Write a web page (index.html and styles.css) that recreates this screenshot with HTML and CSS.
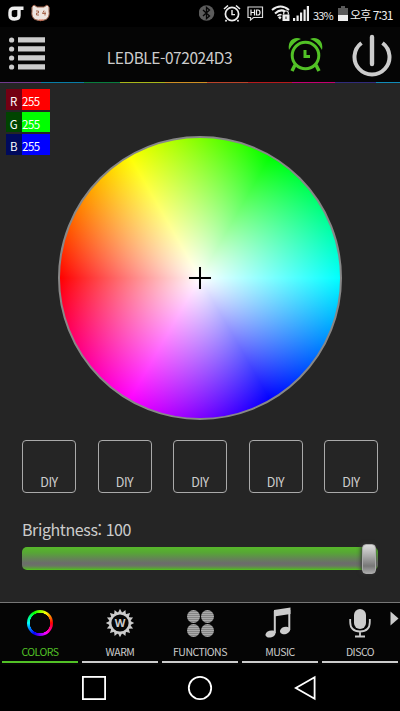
FILE: index.html
```html
<!DOCTYPE html>
<html lang="ko">
<head>
    <meta charset="UTF-8">
    <meta name="viewport" content="width=device-width, initial-scale=1.0">
    <title>LEDBLE</title>
    <link rel="stylesheet" href="styles.css">
</head>
<body>
    <div class="app">
        <div class="status-bar">
            <svg class="carrier" width="16" height="16" viewBox="0 0 16 16"><path d="M15.5 2.3H6.5Q2 2.3 2 6.5V9.5Q2 13 6.5 13T11 9.5V2.5" fill="none" stroke="#eee" stroke-width="3.4"/></svg>
            <svg class="cat" width="19" height="18" viewBox="0 0 19 18">
                <path d="M1 7Q0 2 3 1L6 3H13L16 1Q19 2 18 7Q19 13 15 15.5Q9.5 18 4 15.5Q0 13 1 7Z" fill="#eee5df" stroke="#9b6049"/>
                <path d="M5 7H7.500V9H5.500V11H8M13 6.500L11.500 9.500H15M14 7.500V11.500" fill="none" stroke="#a7674d"/>
                <path d="M8 16H12" stroke="#d66b50"/>
            </svg>
            <div class="status-icons">
                <svg width="16" height="18" viewBox="0 0 16 18"><circle cx="7.5" cy="9" r="7.8" fill="#5c5c5c"/><path d="M4 6L10.5 12L7.5 14.5V3.5L10.5 6L4 12" fill="none" stroke="#050505" stroke-width="1.3"/></svg>
                <svg class="small-alarm" width="18" height="19" viewBox="0 0 18 19"><g fill="none" stroke="#eee"><circle cx="9" cy="10" r="6.6" stroke-width="1.7"/><path d="M1 5L5 1.5M17 5L13 1.5M3.5 16L2.5 17.5M14.5 16L15.5 17.5" stroke-width="1.6"/><path d="M9 6V10.6H12" stroke-width="1.4"/></g></svg>
                <svg class="hd" width="17" height="17" viewBox="0 0 17 17"><path d="M1 2H15.5V12.5H6.5L3.5 15V12.5H1Z" fill="none" stroke="#ddd" stroke-width="1.2"/><path d="M4 4.5V10.5M7.5 4.5V10.5M4 7.5H7.5M9.5 5H11Q13 5 13 7.5T11 10H9.5Z" fill="none" stroke="#eee" stroke-width="1.2"/></svg>
                <svg class="wifi" width="20" height="18" viewBox="0 0 20 18"><g fill="none" stroke="#eee" stroke-width="2"><path d="M1 6Q9.500 -1 18 6M4 9.500Q9.500 4.500 14 7.500"/><path d="M6.500 12Q8.500 10 10.500 11" stroke-width="1.600"/></g><path d="M7 13.500L9 12L10.500 13.500L9 15.500Z" fill="#eee"/><path d="M11.500 10.500H18.500V17H11.500Z" fill="#eee"/><path d="M12.700 10.500V9Q12.700 7 15 7T17.300 9V10.500" fill="none" stroke="#eee" stroke-width="1.200"/><path d="M15 12.500V15" stroke="#111"/></svg>
                <svg class="signal" width="17" height="17" viewBox="0 0 17 17"><path d="M0 13H2.200V16H0ZM3.500 10.500H5.700V16H3.500ZM7 7.500H9.200V16H7ZM10.500 4.500H12.700V16H10.500ZM13.800 1H16V16H13.800Z" fill="#eee"/></svg>
                <span class="percent">33%</span>
                <svg class="battery" width="10" height="16" viewBox="0 0 10 16"><path d="M3 0H7V2H10V10H0V2H3Z" fill="#595959"/><path d="M0 9H10V15H0Z" fill="#eee"/></svg>
                <span class="clock">오후 7:31</span>
            </div>
        </div>

        <div class="header">
            <svg class="menu" width="37" height="34" viewBox="0 0 37 34"><g fill="#ccc"><circle cx="2.600" cy="3" r="2.600"/><circle cx="2.600" cy="12" r="2.600"/><circle cx="2.600" cy="21" r="2.600"/><circle cx="2.600" cy="30" r="2.600"/><path d="M9 .300H36V5.500H9ZM9 9.300H36V14.500H9ZM9 18.300H36V23.500H9ZM9 27.300H36V32.500H9Z"/></g></svg>
            <div class="title"><span>LEDBLE-072024D3</span></div>
            <svg class="alarm" width="36" height="36" viewBox="0 0 36 36"><g fill="none" stroke="#52c126"><circle cx="17.500" cy="18.500" r="13.300" stroke-width="3"/><path d="M17 13V19.500H22" stroke-width="3"/><path d="M7 28L4 34M28 28L31 34" stroke-width="3.500"/></g><path d="M1 13Q-.500 5 5 2Q9 0 13 2Q5 5 1 13ZM34 13Q35.500 5 30 2Q26 0 22 2Q30 5 34 13Z" fill="#52c126"/></svg>
            <svg class="power" width="40" height="43" viewBox="0 0 40 43"><path d="M9.500 9A17.500 17.500 0 1 0 30.500 9" fill="none" stroke="#ccc" stroke-width="4"/><path d="M20 3V30" stroke="#ccc" stroke-width="4.400" stroke-linecap="round"/></svg>
        </div>
        <div class="rainbow"></div>

        <div class="main">
            <div class="rgb">
                <div class="channel red"><span>R</span><b>255</b></div>
                <div class="channel green"><span>G</span><b>255</b></div>
                <div class="channel blue"><span>B</span><b>255</b></div>
            </div>
            <div class="wheel">
                <svg width="24" height="24" viewBox="0 0 24 24"><path d="M.500 12H23.500M12 .500V23.500" stroke="#eee" stroke-opacity=".5" stroke-width="3"/><path d="M1 12H23M12 1V23" stroke="#000" stroke-width="2"/></svg>
            </div>
            <div class="presets">
                <div class="preset">DIY</div>
                <div class="preset">DIY</div>
                <div class="preset">DIY</div>
                <div class="preset">DIY</div>
                <div class="preset">DIY</div>
            </div>
            <div class="brightness"><span>Brightness: 100</span></div>
            <div class="slider"><div class="thumb"></div></div>
        </div>

        <div class="tabs">
            <div class="tab active">
                <div class="icon"><div class="color-ring"></div></div>
                <span>COLORS</span>
            </div>
            <div class="tab">
                <div class="icon"><svg width="30" height="30" viewBox="0 0 30 30">
                    <circle cx="15" cy="15" r="9.700" fill="none" stroke="#ccc" stroke-width="2.200"/>
                    <path id="rays" d="M12.800 5L15 .800L17.200 5ZM12.800 25L15 29.200L17.200 25ZM5 12.800L.800 15L5 17.200ZM25 12.800L29.200 15L25 17.200Z" fill="#ccc"/>
                    <use href="#rays" transform="rotate(22.500 15 15)"/><use href="#rays" transform="rotate(45 15 15)"/><use href="#rays" transform="rotate(67.500 15 15)"/>
                    <text x="15" y="19" text-anchor="middle" class="w-letter">W</text>
                </svg></div>
                <span>WARM</span>
            </div>
            <div class="tab">
                <div class="icon"><div class="dots"><i></i><i></i><i></i><i></i></div></div>
                <span>FUNCTIONS</span>
            </div>
            <div class="tab">
                <div class="icon"><svg class="note" width="28" height="32" viewBox="0 0 28 32"><path d="M10 3L26.500 .500V7L10 9.500Z" fill="#ccc"/><path d="M10.800 4V26M25.300 3V23" stroke="#ccc" stroke-width="2"/><ellipse cx="6.500" cy="27" rx="5.200" ry="3.400" transform="rotate(-18 6.500 27)" fill="#ccc"/><ellipse cx="21" cy="23.500" rx="5.200" ry="3.600" transform="rotate(-18 21 23.500)" fill="#ccc"/></svg></div>
                <span>MUSIC</span>
            </div>
            <div class="tab">
                <div class="icon"><svg width="24" height="30" viewBox="0 0 24 30"><rect x="6" y="1" width="12" height="20" rx="6" fill="#ccc"/><path d="M2.200 11V14Q2.200 23.500 12 23.500T21.800 14V11M12 23.500V28.500M7 28.500H17" fill="none" stroke="#ccc" stroke-width="1.800"/></svg></div>
                <span>DISCO</span>
                <svg class="more" width="9" height="15" viewBox="0 0 9 15"><path d="M.500 .500L8.500 7.500L.500 14.500Z" fill="#ccc"/></svg>
            </div>
        </div>

        <div class="nav-bar">
            <svg width="24" height="26" viewBox="0 0 24 26"><rect x=".900" y="1.900" width="22.200" height="22.200" fill="none" stroke="#fff" stroke-width="1.800"/></svg>
            <svg width="26" height="26" viewBox="0 0 26 26"><circle cx="13" cy="13" r="11.200" fill="none" stroke="#fff" stroke-width="1.800"/></svg>
            <svg width="22" height="26" viewBox="0 0 22 26"><path d="M20.600 2.200V23.800L1.800 13Z" fill="none" stroke="#fff" stroke-width="1.800"/></svg>
        </div>
    </div>
</body>
</html>
```

FILE: styles.css
```css
* {
    box-sizing: border-box;
}
body {
    margin: 0;
    background: #000;
    color: #ccc;
    font-family: "Noto Sans CJK KR", "Noto Sans", sans-serif;
}
svg {
    display: block;
    flex: none;
}
.app {
    width: 400px;
    height: 711px;
    overflow: hidden;
}
.status-bar {
    display: flex;
    height: 27px;
    padding-left: 8px;
    color: #eee;
}
.carrier {
    margin-top: 6px;
}
.cat {
    margin: 4px 0 0 7px;
}
.status-icons {
    display: flex;
    flex: 1;
    margin-left: 149px;
    padding-top: 4px;
    white-space: nowrap;
}
.small-alarm {
    margin-left: 8px;
}
.hd {
    margin: 1px 0 0 6px;
}
.wifi {
    margin: 0 0 0 7px;
}
.signal {
    margin: 1px 0 0 2px;
}
.percent {
    width: 24px;
    margin-left: 3px;
    font-size: 11px;
    line-height: 22px;
    letter-spacing: -0.8px;
}
.battery {
    margin: 2px 0 0 1px;
}
.clock {
    margin-left: 2px;
    font-size: 12px;
    line-height: 22px;
    letter-spacing: -0.9px;
}
.header {
    display: flex;
    height: 55px;
    padding-left: 9px;
    background: #050505;
}
.menu {
    margin-top: 10px;
}
.title {
    width: 247px;
    text-align: center;
    font-size: 15.5px;
    line-height: 60px;
    letter-spacing: -0.45px;
    white-space: nowrap;
}
.alarm {
    margin: 10px 0 0 -5px;
}
.power {
    margin: 7px 0 0 28px;
}
.rainbow {
    height: 1px;
    background: linear-gradient(90deg, #713a8d 41px, #087da6 41px 84px, #087d3e 84px 120px, #a8b619 120px 165px, #cf8f23 165px 207px, #bb4329 207px 248px, #b6191c 248px 292px, #c50070 292px 335px, #302b7b 335px 376px, #118bb9 376px);
}
.main {
    height: 519px;
    padding-top: 6px;
    background: #252525;
}
.rgb {
    display: flex;
    flex-direction: column;
    gap: 2px;
    height: 48px;
    margin-left: 5.5px;
}
.channel {
    display: flex;
    flex: none;
    width: 44.5px;
    height: 20.7px;
    color: #fff;
    font-size: 11.5px;
    line-height: 25px;
}
.channel span {
    width: 16.5px;
    text-align: center;
}
.channel b {
    flex: 1;
    font-weight: normal;
    letter-spacing: -0.5px;
}
.red { background: #f00; }
.red span { background: #740013; }
.green { background: #0f0; }
.green span { background: #004400; }
.blue { background: #00f; }
.blue span { background: #000a5c; }
.red span, .green span, .blue span {
    height: 100%;
}
.wheel {
    display: grid;
    place-items: center;
    width: 284px;
    height: 284px;
    margin-left: 58px;
    margin-top: -1px;
    border: 2px solid #888;
    border-radius: 50%;
    background: radial-gradient(circle closest-side, #fff, rgba(255, 255, 255, 0)),
        conic-gradient(from 270deg, #f00, #ff0, #0f0, #0ff, #00f, #f0f, #f00);
}
.presets {
    display: flex;
    justify-content: space-between;
    padding: 0 22px;
    margin-top: 20px;
}
.preset {
    width: 54px;
    height: 53px;
    padding-top: 31px;
    border: 1px solid #aaa;
    border-radius: 4px;
    text-align: center;
    font-size: 12.5px;
    line-height: 19px;
    letter-spacing: -0.5px;
}
.brightness {
    margin: 25px 0 0 22px;
    font-size: 16px;
    line-height: 23px;
    height: 24px;
    letter-spacing: -0.4px;
}
.slider {
    display: flex;
    justify-content: flex-end;
    align-items: center;
    width: 356px;
    height: 23px;
    margin: 5px 0 0 22px;
    padding-right: 2px;
    border-radius: 5px;
    background: linear-gradient(#57b82a, #57a636 25%, #6c6c6c 70%, #6a7564 82%, #56ad2c 96%, #51c91c);
}
.thumb {
    width: 14px;
    height: 30px;
    border-radius: 4px;
    border: 1px solid #aaa;
    background: linear-gradient(#ddd, #aaa 40%, #777 75%, #aaa);
    box-shadow: -1px 0 4px #353535;
}
.tabs {
    display: grid;
    grid-template-columns: repeat(5, 80px);
    height: 63px;
    border-top: 1px solid #777;
    background: #050505;
}
.tab {
    position: relative;
    display: flex;
    flex-direction: column;
    height: 60px;
    margin: 0 2px;
    border-bottom: 2px solid #ccc;
    text-align: center;
}
.tab span {
    font-size: 10.5px;
    line-height: 17px;
    letter-spacing: -0.5px;
    white-space: nowrap;
}
.tab.active {
    color: #52c126;
    border-color: #52c126;
}
.icon {
    display: grid;
    place-items: center;
    height: 40px;
}
.color-ring {
    width: 26px;
    height: 26px;
    border-radius: 50%;
    background: radial-gradient(circle, #050505 10px, transparent 10.5px),
        conic-gradient(from 90deg, #f00, #f0f, #00f, #0ff, #0f0, #ff0, #f00);
}
.w-letter {
    fill: #ccc;
    font-family: "Open Sans", sans-serif;
    font-size: 11px;
    font-weight: bold;
}
.dots {
    display: grid;
    grid-template-columns: 13px 13px;
    gap: 1px;
}
.dots i {
    height: 13px;
    border-radius: 50%;
    background: repeating-linear-gradient(#aaa 0 1px, #858585 1px 2px);
}
.note {
    margin-left: -4px;
}
.more {
    position: absolute;
    top: 8px;
    right: -1px;
}
.nav-bar {
    display: flex;
    gap: 81px;
    padding: 10px 0 0 82px;
}
```
